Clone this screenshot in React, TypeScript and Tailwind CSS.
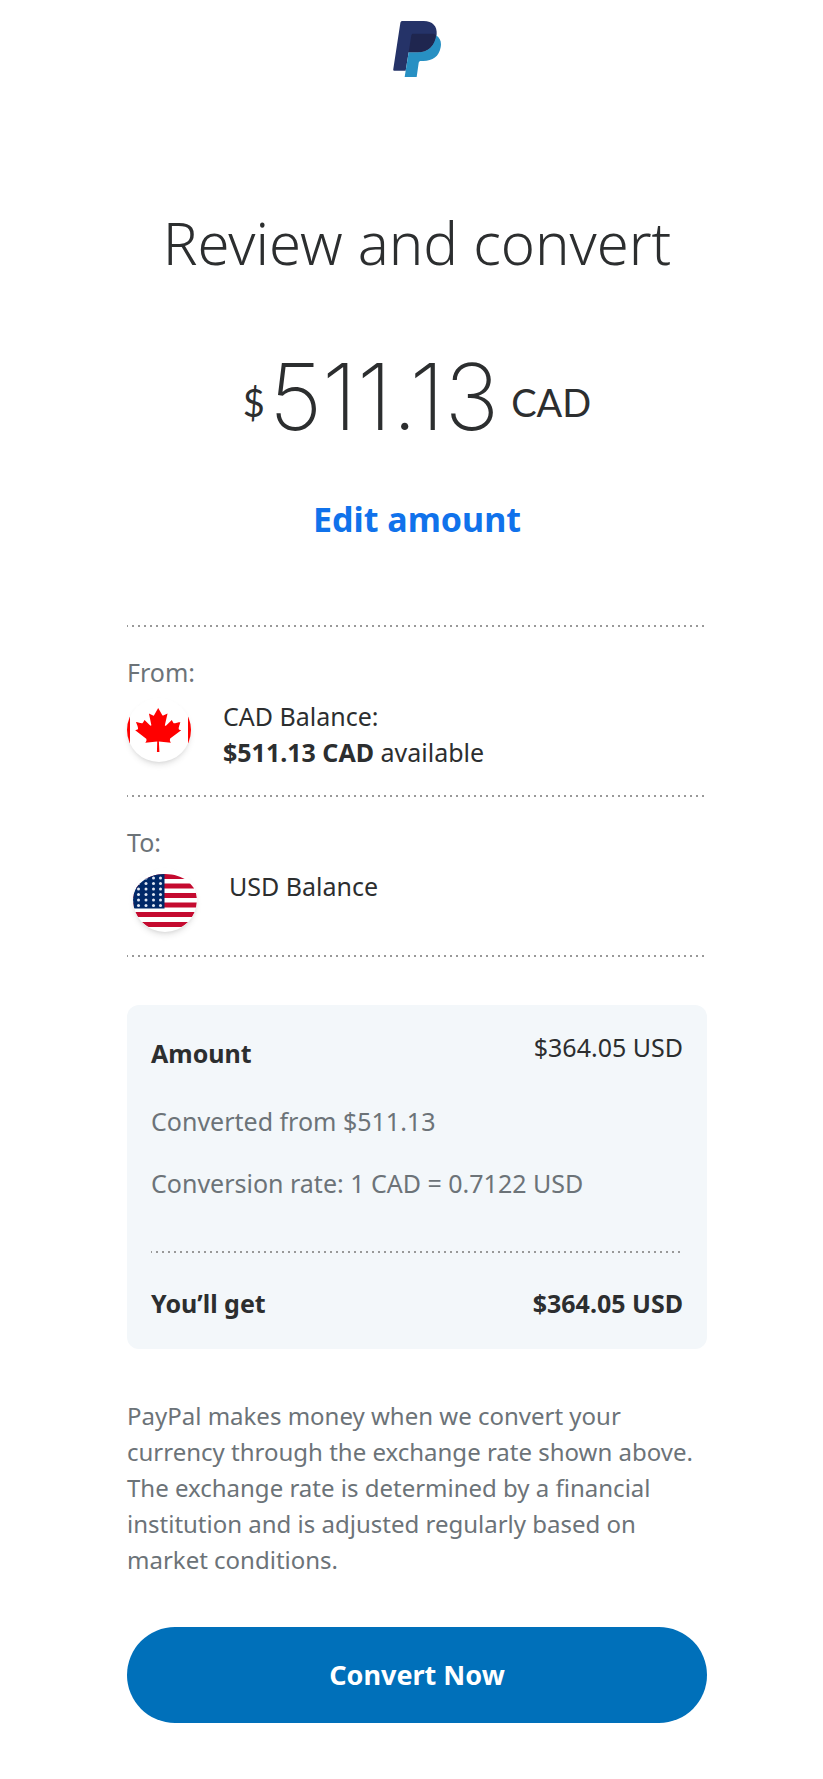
import type { ReactNode } from "react";

const PayPalLogo = () => (
  <svg viewBox="0 0 144 168" className="h-14 w-12" role="img" aria-label="PayPal">
    <path
      fill="#253368"
      d="M29 0H92C119 0 133 16 131 40C127 76 104 94 72 94H47L38 149H5C1 149 0 147 1 143L22 6C23 2 25 0 29 0Z"
    />
    <path
      fill="#2790C3"
      d="M129 43C142 51 146 64 143 79C138 107 119 120 91 120H84C80 120 78 122 77 126L71 168H35L47 94H72C104 94 125 76 129 43Z"
    />
    <path
      fill="#1F264F"
      d="M60 38H118C123 38 127 40 129 43C125 76 104 94 74 94H47L55 43C56 40 57 38 60 38Z"
    />
  </svg>
);

const CanadaFlag = () => (
  <svg viewBox="0 0 64 64" className="size-16 rounded-full bg-white shadow-md" aria-hidden="true">
    <path fill="#f00" d="M0 0H3V64H0ZM61 0H64V64H61Z" />
    <path
      fill="#f00"
      transform="translate(-25.6 -5.1) scale(.18 .158)"
      d="m201 232-13.3 4.4 61.4 54c4.7 13.7-1.6 17.8-5.6 25l66.6-8.4-1.6 67 13.9-.3-3.1-66.6 66.7 8c-4.1-8.7-7.8-13.3-4-27.2l61.3-51-10.7-4c-8.8-6.8 3.8-32.6 5.6-48.9 0 0-35.7 12.3-38 5.8l-9.2-17.5-32.6 35.8c-3.5.9-5-.5-5.9-3.5l15-74.8-23.8 13.4q-3.2 1.3-5.2-2.2l-23-46-23.6 47.8q-2.8 2.5-5 .7L264 130.8l13.7 74.1c-1.1 3-3.7 3.8-6.7 2.2l-31.2-35.3c-4 6.5-6.8 17.1-12.2 19.5s-23.5-4.5-35.6-7c4.2 14.8 17 39.6 9 47.7"
    />
  </svg>
);

const stripes = [7, 16.5, 26, 35.5, 45, 55];
const starRows = [10, 15.5, 21, 26.5, 32, 37.5];
const starCols = [5.5, 13, 20.5, 27.5];

const UsaFlag = () => (
  <svg viewBox="0 0 64 64" className="size-16 rounded-full bg-white shadow-md" aria-hidden="true">
    <clipPath id="usa">
      <path d="M0 32C0 17 14 6 32 6S64 17 64 32C64 50 50 63 32 63S0 50 0 32Z" />
    </clipPath>
    <g clipPath="url(#usa)">
      {stripes.map((y) => (
        <rect key={y} y={y - 1} width="64" height="5" fill="#c40a2f" />
      ))}
      <rect width="31.5" height="40.5" fill="#002868" />
      {starRows.map((y) =>
        starCols.map((x) => (
          <circle key={`${x}-${y}`} cx={x} cy={y} r="1.5" fill="#dfe6f2" />
        ))
      )}
    </g>
  </svg>
);

const DottedLine = () => (
  <hr className="h-[2px] border-0 bg-[repeating-linear-gradient(to_right,#999_0_1px,transparent_1px_5px,#999_5px_6px)]" />
);

type BalanceProps = {
  label: string;
  flag: ReactNode;
  children: ReactNode;
};

const Balance = ({ label, flag, children }: BalanceProps) => (
  <section>
    <h2 className="text-[#6c7378]">{label}</h2>
    <div className="mt-2 flex gap-8">
      {flag}
      <div>{children}</div>
    </div>
  </section>
);

const App = () => {
  return (
    <div className="min-h-screen bg-white pl-[11px] font-['Noto_Sans',sans-serif] text-[25px] leading-9 text-[#2c2e2f]">
      <main className="mx-auto flex max-w-[580px] flex-col pt-[21px] pb-14">
        <header className="flex justify-center">
          <PayPalLogo />
        </header>

        <h1 className="mt-[126px] text-center text-[58px] leading-[80px] font-light">
          Review and convert
        </h1>

        <p className="mt-16 flex items-center justify-center gap-1">
          <span className="pt-2.5 font-[Lato] text-[38px] leading-[48px]">$</span>
          <span className="font-[Inter] text-[92px] leading-[100px] font-extralight">
            511.13
          </span>
          <span className="ml-2 pt-2.5 font-[Lato] text-[38px] leading-[48px]">CAD</span>
        </p>

        <button
          type="button"
          className="mt-12 self-center text-[34px] leading-[48px] font-bold text-[#1072eb]"
        >
          Edit amount
        </button>

        <div className="mt-[82px]">
          <DottedLine />
          <div className="pt-[27px] pb-[25px]">
            <Balance label="From:" flag={<CanadaFlag />}>
              <p>CAD Balance:</p>
              <p>
                <strong>$511.13 CAD</strong> available
              </p>
            </Balance>
          </div>
          <DottedLine />
          <div className="pt-[27px] pb-[23px]">
            <Balance
              label="To:"
              flag={
                <div className="pl-1.5">
                  <UsaFlag />
                </div>
              }
            >
              <p>USD Balance</p>
            </Balance>
          </div>
          <DottedLine />
        </div>

        <section className="mt-12 rounded-xl bg-[#f3f7fa] px-6 pt-6 pb-7">
          <div className="flex justify-between">
            <h2 className="mt-1.5 font-bold">Amount</h2>
            <p>$364.05 USD</p>
          </div>
          <p className="mt-8 text-[#6c7378]">Converted from $511.13</p>
          <p className="mt-[26px] mb-[50px] text-[#6c7378]">
            Conversion rate: 1 CAD = 0.7122 USD
          </p>
          <DottedLine />
          <div className="mt-8 flex justify-between font-bold">
            <h2>You’ll get</h2>
            <p>$364.05 USD</p>
          </div>
        </section>

        <p className="mt-[49px] text-2xl leading-9 text-[#6c7378]">
          PayPal makes money when we convert your currency through the exchange
          rate shown above. The exchange rate is determined by a financial
          institution and is adjusted regularly based on market conditions.
        </p>

        <button
          type="button"
          className="mt-[49px] h-24 rounded-full bg-[#0070ba] text-[27px] font-bold text-white"
        >
          Convert Now
        </button>
      </main>
    </div>
  );
};

export default App;
